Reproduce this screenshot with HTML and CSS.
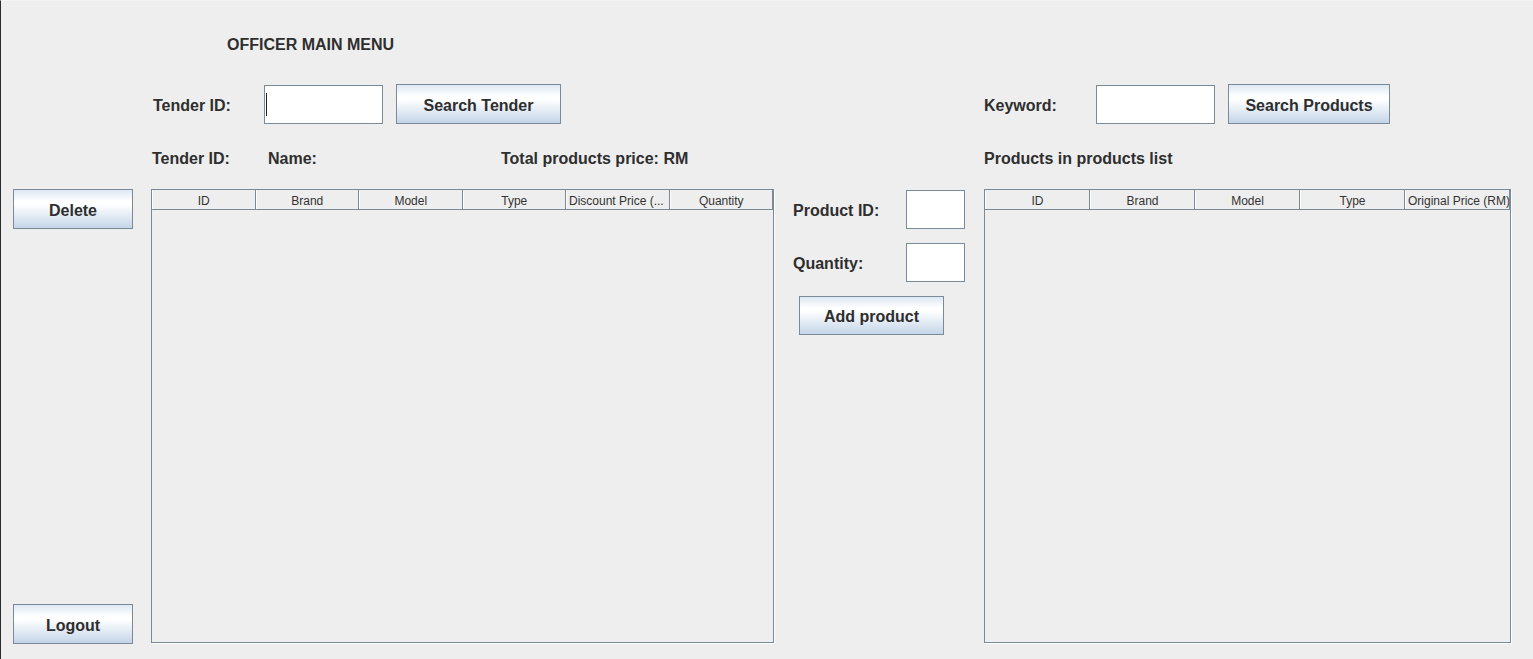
FILE: index.html
```html
<!DOCTYPE html>
<html>
<head>
<meta charset="utf-8">
<title>Officer Main Menu</title>
<link rel="stylesheet" href="styles.css">
</head>
<body>
<div class="app">
  <div class="title">OFFICER MAIN MENU</div>

  <div class="row1-left">
    <span class="lbl lbl-r1 lbl-tender">Tender ID:</span>
    <div class="field field-wide"><span class="caret"></span></div>
    <div class="btn btn-search-tender">Search Tender</div>
  </div>
  <div class="row1-right">
    <span class="lbl lbl-r1 lbl-keyword">Keyword:</span>
    <div class="field field-wide"></div>
    <div class="btn btn-search-products">Search Products</div>
  </div>

  <div class="row2-left">
    <span class="lbl info-tender">Tender ID:</span>
    <span class="lbl info-name">Name:</span>
    <span class="lbl">Total products price: RM</span>
  </div>
  <div class="row2-right">
    <span class="lbl">Products in products list</span>
  </div>

  <div class="sidebar">
    <div class="btn btn-side">Delete</div>
    <div class="btn btn-side">Logout</div>
  </div>

  <div class="table table-left">
    <div class="thead cols-6">
      <div class="th">ID</div>
      <div class="th">Brand</div>
      <div class="th">Model</div>
      <div class="th">Type</div>
      <div class="th th-left">Discount Price (...</div>
      <div class="th">Quantity</div>
    </div>
    <div class="tbody"></div>
  </div>

  <div class="middle">
    <div class="form-row">
      <span class="lbl lbl-mid">Product ID:</span>
      <div class="field field-small"></div>
    </div>
    <div class="form-row">
      <span class="lbl lbl-mid">Quantity:</span>
      <div class="field field-small"></div>
    </div>
    <div class="btn btn-add">Add product</div>
  </div>

  <div class="table table-right">
    <div class="thead cols-5">
      <div class="th">ID</div>
      <div class="th">Brand</div>
      <div class="th">Model</div>
      <div class="th">Type</div>
      <div class="th th-left">Original Price (RM)</div>
    </div>
    <div class="tbody"></div>
  </div>
</div>
</body>
</html>
```

FILE: styles.css
```css
* { box-sizing: border-box; }

html, body {
  margin: 0;
  padding: 0;
  background: #eeeeee;
}

body {
  font-family: "Liberation Sans", Arial, sans-serif;
  color: #2e2e2e;
  overflow: hidden;
}

.app {
  width: 1533px;
  height: 659px;
  border-left: 1px solid #2b2b2b;
  border-top: 1px solid #f4f4f4;
  padding: 33px 0 0 12px;
  display: grid;
  grid-template-columns: 120px 18px 623px 210px 527px;
  grid-template-rows: 50px 64px 41px 455px;
  align-items: start;
}

.lbl {
  font-size: 16px;
  font-weight: bold;
  line-height: 20px;
  white-space: nowrap;
}

.title {
  grid-column: 3;
  grid-row: 1;
  padding-left: 76px;
  padding-top: 1px;
  font-size: 16px;
  font-weight: bold;
  line-height: 20px;
}

/* row 1 */
.row1-left {
  grid-column: 3;
  grid-row: 2;
  display: flex;
  align-items: center;
  height: 40px;
  padding-left: 2px;
}
.row1-right {
  grid-column: 5;
  grid-row: 2;
  display: flex;
  align-items: center;
  height: 40px;
}
.lbl-r1 { padding-top: 4px; }
.lbl-tender { width: 111px; }
.lbl-keyword { width: 112px; }

.field {
  background: #ffffff;
  border: 1px solid #7a8a99;
  display: flex;
  align-items: center;
  padding-left: 1px;
}
.field-wide {
  width: 119px;
  height: 39px;
  margin-right: 13px;
  margin-top: 1px;
}
.field-small {
  width: 59px;
  height: 39px;
}
.caret {
  width: 1px;
  height: 23px;
  background: #222;
}

.btn {
  border: 1px solid #7a8a99;
  background: linear-gradient(#dde8f3 0%, #ffffff 30%, #ffffff 38%, #c4d5e8 100%);
  font-size: 16px;
  font-weight: bold;
  line-height: 20px;
  padding-top: 4px;
  display: flex;
  align-items: center;
  justify-content: center;
  white-space: nowrap;
}
.btn-search-tender { width: 165px; height: 40px; }
.btn-search-products { width: 162px; height: 40px; }

/* row 2 */
.row2-left {
  grid-column: 3;
  grid-row: 3;
  display: flex;
  padding-left: 1px;
  padding-top: 1px;
}
.info-tender { width: 116px; }
.info-name { width: 233px; }
.row2-right {
  grid-column: 5;
  grid-row: 3;
  padding-top: 1px;
}

/* sidebar */
.sidebar {
  grid-column: 1;
  grid-row: 4;
  height: 455px;
  display: flex;
  flex-direction: column;
  justify-content: space-between;
}
.btn-side { width: 120px; height: 40px; }

/* tables */
.table {
  grid-row: 4;
  height: 454px;
  border: 1px solid #7a8a99;
  box-shadow: 1px 1px 0 #ffffff;
  display: flex;
  flex-direction: column;
}
.table-left { grid-column: 3; }
.table-right { grid-column: 5; }

.thead {
  display: grid;
  height: 20px;
  border-bottom: 1px solid #7a8a99;
}
.cols-6 { grid-template-columns: repeat(6, 1fr); }
.cols-5 { grid-template-columns: repeat(5, 1fr); }

.th {
  font-size: 12px;
  line-height: 15px;
  padding-top: 4px;
  text-align: center;
  white-space: nowrap;
  overflow: hidden;
  border-left: 1px solid #ffffff;
  border-right: 1px solid #7a8a99;
  color: #333;
}
.th-left { text-align: left; padding-left: 2px; }

.tbody {
  flex: 1;
  background: #eeeeee;
}

/* middle form */
.middle {
  grid-column: 4;
  grid-row: 4;
  padding-left: 19px;
  padding-top: 1px;
  display: flex;
  flex-direction: column;
  align-items: flex-start;
}
.form-row {
  display: flex;
  align-items: center;
  margin-bottom: 14px;
}
.lbl-mid { padding-top: 2px; width: 113px; }
.btn-add {
  width: 145px;
  height: 39px;
  padding-top: 3px;
  margin-left: 6px;
}
```
